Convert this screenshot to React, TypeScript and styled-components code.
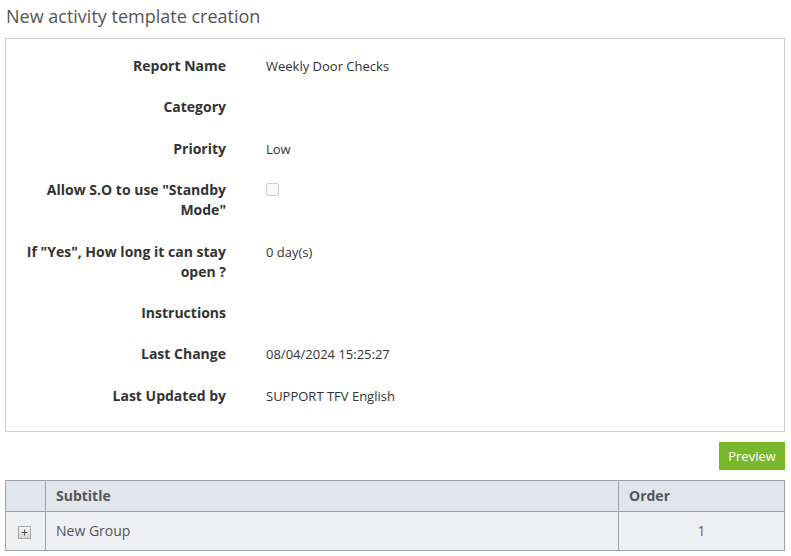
import styled, { createGlobalStyle } from 'styled-components';

interface IField {
  label: string;
  value?: string;
  checkbox?: boolean;
}

const fields: IField[] = [
  { label: 'Report Name', value: 'Weekly Door Checks' },
  { label: 'Category' },
  { label: 'Priority', value: 'Low' },
  { label: 'Allow S.O to use "Standby Mode"', checkbox: true },
  { label: 'If "Yes", How long it can stay open ?', value: '0 day(s)' },
  { label: 'Instructions' },
  { label: 'Last Change', value: '08/04/2024 15:25:27' },
  { label: 'Last Updated by', value: 'SUPPORT TFV English' },
];

export default function App() {
  return (
    <>
      <GlobalStyle />
      <Page>
        <Title>New activity template creation</Title>
        <Panel>
          {fields.map((f) => (
            <FieldRow key={f.label}>
              <Label>{f.label}</Label>
              <Value>{f.checkbox ? <Check /> : f.value}</Value>
            </FieldRow>
          ))}
        </Panel>
        <Actions>
          <PreviewButton>Preview</PreviewButton>
        </Actions>
        <Table>
          <thead>
            <tr>
              <HeadCell $width={40} />
              <HeadCell>Subtitle</HeadCell>
              <HeadCell $width={166}>Order</HeadCell>
            </tr>
          </thead>
          <tbody>
            <tr>
              <BodyCell $align="center">
                <Expand>
                  <svg width="7" height="7" viewBox="0 0 7 7">
                    <path d="M3.5 0.5v6M0.5 3.5h6" stroke="#555" strokeWidth="1" />
                  </svg>
                </Expand>
              </BodyCell>
              <BodyCell>New Group</BodyCell>
              <BodyCell $align="center" $color="#8a4a4a">
                1
              </BodyCell>
            </tr>
          </tbody>
        </Table>
      </Page>
    </>
  );
}

const GlobalStyle = createGlobalStyle`
  body {
    margin: 0;
    background: #fff;
    font-family: "Open Sans", "DejaVu Sans", sans-serif;
    color: #333;
  }
`;

const Page = styled.div`
  padding: 0 6px 0 5px;
`;

const Title = styled.h1`
  margin: 0;
  padding: 3px 0 0 1px;
  height: 38px;
  box-sizing: border-box;
  font-size: 18px;
  font-weight: 400;
  color: #555;
  line-height: 26px;
`;

const Panel = styled.div`
  border: 1px solid #cfcfcf;
  padding: 17px 0 25px;
  display: flex;
  flex-direction: column;
  gap: 21.4px;
`;

const FieldRow = styled.div`
  display: grid;
  grid-template-columns: 220px 1fr;
  column-gap: 40px;
  font-size: 14px;
  line-height: 20px;
`;

const Label = styled.div`
  text-align: right;
  font-weight: 700;
  color: #333;
  padding-left: 10px;
`;

const Value = styled.div`
  font-size: 13px;
  color: #333;
`;

const Check = styled.span`
  display: inline-block;
  width: 11px;
  height: 11px;
  margin-top: 3px;
  border: 1px solid #cfcfcf;
  border-radius: 2px;
  background: #fafafa;
`;

const Actions = styled.div`
  display: flex;
  justify-content: flex-end;
  padding: 10px 0 10px;
`;

const PreviewButton = styled.button`
  width: 66px;
  height: 28px;
  border: none;
  background: #78b82a;
  color: #fff;
  font-family: "Open Sans", sans-serif;
  font-size: 13px;
  padding: 0;
`;

const Table = styled.table`
  width: 100%;
  border-collapse: collapse;
  font-size: 14px;
  color: #555;
`;

const HeadCell = styled.th<{ $width?: number }>`
  width: ${(p) => (p.$width ? `${p.$width}px` : 'auto')};
  height: 31px;
  box-sizing: border-box;
  background: #e2e5ec;
  border: 1px solid #9ba1ab;
  text-align: left;
  padding: 0 10px;
  font-weight: 700;
  color: #555;
`;

const BodyCell = styled.td<{ $align?: string; $color?: string }>`
  height: 39px;
  box-sizing: border-box;
  background: #eff0f4;
  border: 1px solid #9ba1ab;
  padding: 0 10px;
  text-align: ${(p) => p.$align || 'left'};
  color: ${(p) => p.$color || '#555'};
`;

const Expand = styled.span`
  display: inline-flex;
  align-items: center;
  justify-content: center;
  width: 11px;
  height: 11px;
  border: 1px solid #a8a8a8;
  background: linear-gradient(#f4f4f4, #d6d6d6);
  vertical-align: middle;
  margin-left: -2px;
`;
